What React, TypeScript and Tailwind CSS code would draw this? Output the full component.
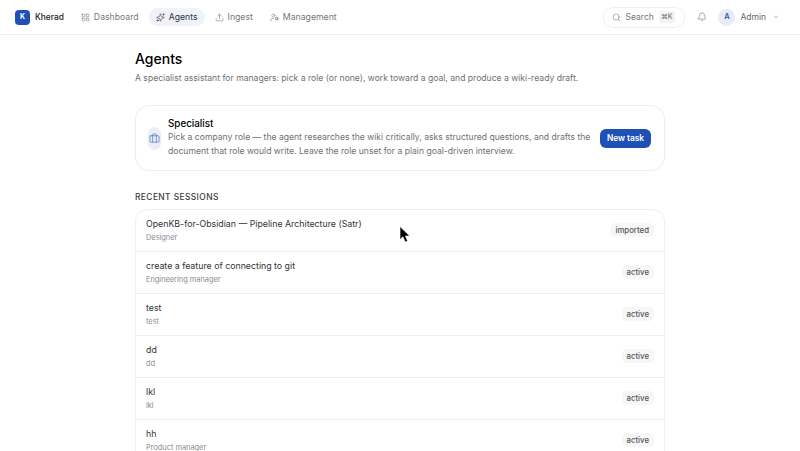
import { Bell, Briefcase, ChevronDown, LayoutGrid, Search, Sparkles, Upload, UserCog } from 'lucide-react';

const sessions = [
  { title: 'OpenKB-for-Obsidian — Pipeline Architecture (Satr)', role: 'Designer', status: 'imported' },
  { title: 'create a feature of connecting to git', role: 'Engineering manager', status: 'active' },
  { title: 'test', role: 'test', status: 'active' },
  { title: 'dd', role: 'dd', status: 'active' },
  { title: 'lkl', role: 'lkl', status: 'active' },
  { title: 'hh', role: 'Product manager', status: 'active' },
];

function Cursor() {
  return (
    <svg className="absolute left-[263px] top-[16px]" width="12" height="17" viewBox="0 0 12 17">
      <path d="M1 0.5V13.5L4 10.8L6.2 16L8.6 15L6.4 10H10.6Z" fill="#000" stroke="#fff" strokeWidth="0.6" />
    </svg>
  );
}

export default function App() {
  return (
    <div className="h-[451px] w-[800px] overflow-hidden bg-white font-['Inter',sans-serif] text-[#1a1a1c]">
      {/* Top bar */}
      <header className="flex h-[35px] items-center justify-between border-b border-[#f0f0f2] pl-[15px] pr-[20px]">
        <div className="flex items-center">
          <div className="flex h-[15px] w-[15px] items-center justify-center rounded-[4px] bg-[#1f50b5] text-[7px] font-bold text-white">K</div>
          <span className="ml-[5px] text-[8.4px] font-medium">Kherad</span>
          <nav className="ml-[10px] flex items-center gap-[3px] text-[8.7px] text-[#77777c]">
            <a className="flex h-[18px] items-center gap-[4px] rounded-full px-[7px] pt-[1px]">
              <LayoutGrid size={9} strokeWidth={1.5} />
              Dashboard
            </a>
            <a className="flex h-[18px] items-center gap-[4px] rounded-full bg-[#eff2f8] px-[7px] pt-[1px] text-[#333338]">
              <Sparkles size={9} strokeWidth={1.5} />
              Agents
            </a>
            <a className="flex h-[18px] items-center gap-[4px] rounded-full px-[7px] pt-[1px]">
              <Upload size={9} strokeWidth={1.5} />
              Ingest
            </a>
            <a className="flex h-[18px] items-center gap-[4px] rounded-full px-[7px] pt-[1px]">
              <UserCog size={9} strokeWidth={1.5} />
              Management
            </a>
          </nav>
        </div>
        <div className="flex items-center">
          <div className="flex h-[21px] w-[82px] items-center rounded-full border border-[#efeff1] pl-[8px] text-[8.6px] text-[#77777c]">
            <Search size={9} strokeWidth={1.5} />
            <span className="ml-[4px]">Search</span>
            <span className="ml-[5px] rounded-[3px] bg-[#f3f3f5] px-[2px] py-[1px] text-[7px] font-medium">⌘K</span>
          </div>
          <Bell className="ml-[12px] text-[#77777c]" size={10} strokeWidth={1.5} />
          <div className="ml-[11px] flex h-[17px] w-[17px] items-center justify-center rounded-full bg-[#e6ebf6] text-[7.5px] font-semibold text-[#2f5bb0]">A</div>
          <span className="ml-[5px] text-[8.5px] text-[#66666b]">Admin</span>
          <ChevronDown className="ml-[6px] text-[#77777c]" size={8} strokeWidth={1.5} />
        </div>
      </header>

      <main className="mx-auto w-[530px] pt-[14px]">
        <h1 className="text-[14px] font-medium leading-[20px] text-black">Agents</h1>
        <p className="mt-[2px] text-[8.6px] leading-[14px] text-[#6f6f74]">
          A specialist assistant for managers: pick a role (or none), work toward a goal, and produce a wiki-ready draft.
        </p>

        {/* Specialist card */}
        <section className="mt-[20px] flex h-[66px] items-center rounded-[14px] border border-[#eeeef0] pl-[12px] pr-[13px]">
          <div className="flex h-[23px] w-[13px] shrink-0 items-center justify-center rounded-full bg-[#e9eef7] text-[#2f5bb0]">
            <Briefcase className="shrink-0" size={11} strokeWidth={1.25} />
          </div>
          <div className="ml-[7px] min-w-0 flex-1">
            <h2 className="text-[9.8px] font-medium leading-[12px] text-black">Specialist</h2>
            <p className="text-[8.6px] leading-[14px] text-[#6f6f74]">
              Pick a company role — the agent researches the wiki critically, asks structured questions, and drafts the document that role would write. Leave the role unset for a plain goal-driven interview.
            </p>
          </div>
          <button className="ml-[7px] flex h-[19px] w-[51px] shrink-0 items-center justify-center rounded-[6px] bg-[#1f50b5] text-[8.3px] font-semibold text-white">
            New task
          </button>
        </section>

        <h3 className="mt-[20px] text-[8.4px] font-medium leading-[12px] tracking-[0.05em] text-[#3a3a3e]">RECENT SESSIONS</h3>

        {/* Session list */}
        <div className="relative mt-[6px] overflow-hidden rounded-t-[12px] border border-[#f0f0f2]">
          {sessions.map((session) => (
            <div key={session.title} className="flex h-[42px] items-center justify-between border-b border-[#f0f0f2] px-[10px] pb-[2px]">
              <div>
                <div className="text-[8.8px] leading-[13px] text-[#333338]">{session.title}</div>
                <div className="mt-[2px] text-[7.4px] leading-[11px] text-[#8a8a8f]">{session.role}</div>
              </div>
              <span className="rounded-[5px] bg-[#f6f6f7] px-[5px] py-[2px] text-[7.8px] font-medium leading-[10px] text-[#55555a]">{session.status}</span>
            </div>
          ))}
          <Cursor />
        </div>
      </main>
    </div>
  );
}
